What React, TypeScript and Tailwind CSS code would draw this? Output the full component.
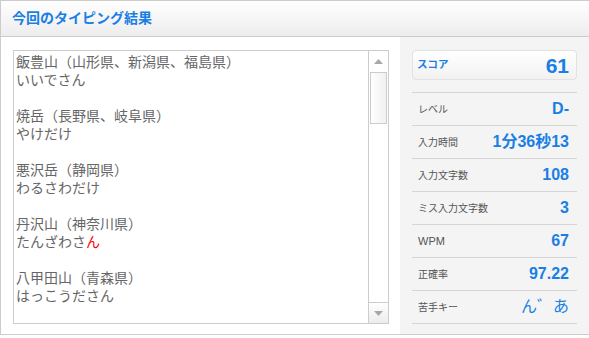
const font = { fontFamily: '"Liberation Sans", "Noto Sans CJK JP", sans-serif' };

const entries = [
  { name: '飯豊山（山形県、新潟県、福島県）', kana: 'いいでさん' },
  { name: '焼岳（長野県、岐阜県）', kana: 'やけだけ' },
  { name: '悪沢岳（静岡県）', kana: 'わるさわだけ' },
  { name: '丹沢山（神奈川県）', kana: 'たんざわさ', miss: 'ん' },
  { name: '八甲田山（青森県）', kana: 'はっこうだ', rest: 'さん' },
];

const stats = [
  { label: 'レベル', value: 'D-' },
  { label: '入力時間', value: '1分36秒13' },
  { label: '入力文字数', value: '108' },
  { label: 'ミス入力文字数', value: '3' },
  { label: 'WPM', value: '67', latin: true },
  { label: '正確率', value: '97.22' },
];

const Triangle = ({ down = false }: { down?: boolean }) => (
  <svg width="9" height="5" viewBox="0 0 9 5">
    <polygon points={down ? '0,0 9,0 4.5,5' : '0,5 9,5 4.5,0'} fill="#a8a8a8" />
  </svg>
);

const ResultText = () => (
  <div className="flex h-[274px] w-[376px] border border-[#cccccc] bg-white">
    <div
      className="flex-1 overflow-hidden pl-[2px] pt-[2px] text-[14px] leading-[18px] text-[#666666]"
      style={font}
    >
      {entries.map((e, i) => (
        <div key={i}>
          <div className="whitespace-nowrap">{e.name}</div>
          <div className="whitespace-nowrap">
            {e.kana}
            {e.miss && <span className="text-[#ff0000]">{e.miss}</span>}
            {e.rest}
          </div>
          <div className="h-[18px]" />
        </div>
      ))}
    </div>
    {/* scrollbar */}
    <div className="flex w-[20px] flex-col border-l border-[#cccccc]">
      <div className="flex h-[20px] items-center justify-center">
        <Triangle />
      </div>
      <div className="mx-[1px] mt-[1px] h-[52px] border border-[#cccccc] bg-gradient-to-r from-white to-[#f0f0f0]" />
      <div className="flex-1" />
      <div className="flex h-[21px] items-center justify-center border-t border-[#cccccc] bg-gradient-to-b from-white to-[#ececec]">
        <Triangle down />
      </div>
    </div>
  </div>
);

const StatsPanel = () => (
  <div className="w-[189px] bg-[#f4f4f4] px-[12px] pt-[13px]" style={font}>
    <div className="flex h-[30px] items-center justify-between rounded-[4px] border border-[#e2e2e2] bg-gradient-to-b from-white to-[#f1f1f1] pl-[4px] pr-[7px]">
      <span className="text-[10.5px] font-bold text-[#1a7fe5]">スコア</span>
      <span className="text-[21px] font-bold leading-none text-[#1a7fe5]">61</span>
    </div>
    <div className="mt-[12px] border-t border-[#d6d6d6]">
      {stats.map((s) => (
        <div
          key={s.label}
          className="flex h-[33px] items-center justify-between border-b border-[#d6d6d6] pl-[6px] pr-[8px]"
        >
          <span className={`${s.latin ? 'text-[11px]' : 'text-[10px]'} text-[#555555]`}>{s.label}</span>
          <span className="text-[16px] font-bold leading-none text-[#1a7fe5]">{s.value}</span>
        </div>
      ))}
      <div className="flex h-[33px] items-center justify-between border-b border-[#d6d6d6] pl-[6px] pr-[8px]">
        <span className="text-[10px] text-[#555555]">苦手キー</span>
        <span className="text-[16px] leading-none text-[#1a7fe5]">ん゛あ</span>
      </div>
    </div>
  </div>
);

export default function App() {
  return (
    <div className="h-[338px] w-[589px] overflow-hidden bg-white">
      <div className="flex h-[335px] w-[589px] flex-col border-b border-l border-t border-[#cccccc]">
        <div className="flex h-[36px] shrink-0 items-center border-b border-[#cccccc] bg-gradient-to-b from-white to-[#ededed] pl-[11px]">
          <h2 className="text-[14px] font-bold text-[#1a7fe5]" style={font}>
            今回のタイピング結果
          </h2>
        </div>
        <div className="flex flex-1">
          <div className="w-[399px] pl-[12px] pt-[13px]">
            <ResultText />
          </div>
          <StatsPanel />
        </div>
      </div>
    </div>
  );
}
